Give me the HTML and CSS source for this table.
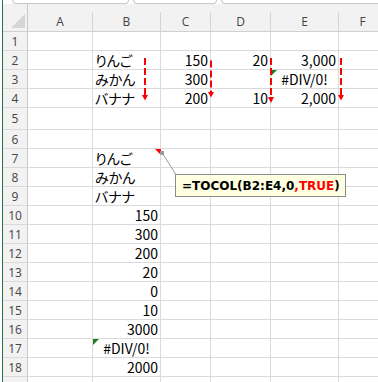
FILE: index.html
```html
<!DOCTYPE html>
<html lang="ja">
<head>
<meta charset="utf-8">
<title>TOCOL</title>
<link rel="stylesheet" href="styles.css">
</head>
<body>
<div class="app">
  <div class="edge"></div>
  <div class="main">
    <div class="chrome">
      <div class="tab t1"></div>
      <div class="tab t2"></div>
      <div class="tab t3"></div>
    </div>
    <div class="sheet">
      <div class="corner"><span class="selall"></span></div>
      <div class="band"></div>
      <div class="ch">A</div><div class="ch">B</div><div class="ch">C</div><div class="ch">D</div><div class="ch">E</div><div class="ch">F</div>

      <div class="rh">1</div><div class="c"></div><div class="c"></div><div class="c"></div><div class="c"></div><div class="c"></div><div class="c"></div>
      <div class="rh">2</div><div class="c"></div><div class="c jp">りんご</div><div class="c r">150</div><div class="c r">20</div><div class="c r">3,000</div><div class="c"></div>
      <div class="rh">3</div><div class="c"></div><div class="c jp">みかん</div><div class="c r">300</div><div class="c"></div><div class="c ctr gerr">#DIV/0!</div><div class="c"></div>
      <div class="rh">4</div><div class="c"></div><div class="c jp">バナナ</div><div class="c r">200</div><div class="c r">10</div><div class="c r">2,000</div><div class="c"></div>
      <div class="rh">5</div><div class="c"></div><div class="c"></div><div class="c"></div><div class="c"></div><div class="c"></div><div class="c"></div>
      <div class="rh">6</div><div class="c"></div><div class="c"></div><div class="c"></div><div class="c"></div><div class="c"></div><div class="c"></div>
      <div class="rh">7</div><div class="c"></div><div class="c jp cmt">りんご</div><div class="c"></div><div class="c"></div><div class="c"></div><div class="c"></div>
      <div class="rh">8</div><div class="c"></div><div class="c jp">みかん</div><div class="c"></div><div class="c"></div><div class="c"></div><div class="c"></div>
      <div class="rh">9</div><div class="c"></div><div class="c jp">バナナ</div><div class="c"></div><div class="c"></div><div class="c"></div><div class="c"></div>
      <div class="rh">10</div><div class="c"></div><div class="c r">150</div><div class="c"></div><div class="c"></div><div class="c"></div><div class="c"></div>
      <div class="rh">11</div><div class="c"></div><div class="c r">300</div><div class="c"></div><div class="c"></div><div class="c"></div><div class="c"></div>
      <div class="rh">12</div><div class="c"></div><div class="c r">200</div><div class="c"></div><div class="c"></div><div class="c"></div><div class="c"></div>
      <div class="rh">13</div><div class="c"></div><div class="c r">20</div><div class="c"></div><div class="c"></div><div class="c"></div><div class="c"></div>
      <div class="rh">14</div><div class="c"></div><div class="c r">0</div><div class="c"></div><div class="c"></div><div class="c"></div><div class="c"></div>
      <div class="rh">15</div><div class="c"></div><div class="c r">10</div><div class="c"></div><div class="c"></div><div class="c"></div><div class="c"></div>
      <div class="rh">16</div><div class="c"></div><div class="c r">3000</div><div class="c"></div><div class="c"></div><div class="c"></div><div class="c"></div>
      <div class="rh">17</div><div class="c"></div><div class="c ctr gerr">#DIV/0!</div><div class="c"></div><div class="c"></div><div class="c"></div><div class="c"></div>
      <div class="rh">18</div><div class="c"></div><div class="c r">2000</div><div class="c"></div><div class="c"></div><div class="c"></div><div class="c"></div>
      <div class="rh">19</div><div class="c"></div><div class="c"></div><div class="c"></div><div class="c"></div><div class="c"></div><div class="c"></div>
    </div>
  </div>

  <svg class="overlay" width="378" height="382" viewBox="0 0 378 382">
    <g class="arrows">
      <line x1="145" y1="58" x2="145" y2="95"/>
      <polygon points="142,95 148,95 145,100.5"/>
      <line x1="211" y1="60.5" x2="211" y2="92"/>
      <polygon points="208,92 214,92 211,97.5"/>
      <line x1="271" y1="58" x2="271" y2="97"/>
      <polygon points="268,97 274,97 271,103"/>
      <line x1="341" y1="58" x2="341" y2="95"/>
      <polygon points="338,95 344,95 341,100.5"/>
    </g>
    <line class="lead" x1="162.5" y1="153.5" x2="176.5" y2="175.5"/>
    <rect class="anchor" x="160" y="151" width="4" height="4"/>
  </svg>

  <div class="comment"><span>=TOCOL(B2:E4,0</span><span class="kw">,TRUE</span><span>)</span></div>
</div>
</body>
</html>
```

FILE: styles.css
```css
* { box-sizing: border-box; }

html, body {
  margin: 0;
  padding: 0;
  background: #ffffff;
  overflow: hidden;
}

.app {
  position: relative;
  display: flex;
  width: 378px;
  height: 382px;
  overflow: hidden;
  background: #ffffff;
}

.edge {
  flex: none;
  width: 3px;
  border-right: 1px solid #217346;
}

.main {
  flex: 1;
  min-width: 0;
  overflow: hidden;
}

.chrome {
  display: flex;
  gap: 4px;
  height: 4px;
  padding-left: 9px;
  background: #ffffff;
}

.tab {
  height: 4px;
  border: 1px solid #c8c8c8;
  border-top: none;
  border-radius: 0 0 4px 4px;
}

.t1 { width: 117px; }
.t2 { width: 84px; }
.t3 { flex: 1; border-right: none; border-bottom-right-radius: 0; }

.sheet {
  display: grid;
  grid-template-columns: 25px 65px 68px 50px 60px 68px 48px;
  grid-template-rows: 8px 20px repeat(4, 19px) 22px repeat(14, 19px);
  font-family: "Noto Sans CJK JP", sans-serif;
  font-size: 14px;
  color: #000000;
}

.corner {
  grid-row: 1 / span 2;
  grid-column: 1;
  background: #f2f2f2;
  border-right: 1px solid #c8c8c8;
  border-bottom: 1px solid #d0d0d0;
  display: flex;
  align-items: flex-end;
  justify-content: flex-end;
  padding: 0 2px 3px 0;
}

.selall {
  width: 0;
  height: 0;
  border-left: 14px solid transparent;
  border-bottom: 14px solid #d6d6d6;
}

.band {
  grid-row: 1;
  grid-column: 2 / -1;
  background: #f2f2f2;
}

.ch {
  background: #f2f2f2;
  border-right: 1px solid #d4d4d4;
  border-bottom: 1px solid #d0d0d0;
  display: flex;
  align-items: center;
  justify-content: center;
  font-family: "Open Sans", sans-serif;
  font-size: 12px;
  color: #444444;
  padding-bottom: 1px;
}

.rh {
  background: #f2f2f2;
  border-right: 1px solid #c8c8c8;
  border-bottom: 1px solid #dadada;
  display: flex;
  align-items: center;
  justify-content: center;
  font-family: "Open Sans", sans-serif;
  font-size: 12px;
  color: #444444;
}

.c {
  position: relative;
  border-right: 1px solid #dadada;
  border-bottom: 1px solid #dadada;
  padding: 0 2px 0 2px;
  display: flex;
  align-items: center;
  white-space: nowrap;
  line-height: 18px;
}

.r { justify-content: flex-end; }
.ctr { justify-content: center; }
.jp { font-feature-settings: "palt" 1; }

.gerr::before {
  content: "";
  position: absolute;
  left: 0;
  top: 0;
  width: 0;
  height: 0;
  border-top: 6px solid #1f7a2a;
  border-right: 6px solid transparent;
}

.cmt::after {
  content: "";
  position: absolute;
  right: -1px;
  top: 0;
  width: 0;
  height: 0;
  border-top: 6px solid #ff0000;
  border-left: 6px solid transparent;
}

.overlay {
  position: absolute;
  left: 0;
  top: 0;
  pointer-events: none;
}

.arrows line {
  stroke: #ff0000;
  stroke-width: 2;
  stroke-dasharray: 7 3;
}

.arrows polygon {
  fill: #ff0000;
}

.lead {
  stroke: #9a9a9a;
  stroke-width: 1;
}

.anchor {
  fill: #9a9a9a;
}

.comment {
  position: absolute;
  left: 175px;
  top: 174px;
  width: 171px;
  height: 23px;
  background: #ffffe1;
  border: 1px solid #8c8c8c;
  display: flex;
  align-items: center;
  padding-left: 6px;
  font-family: "DejaVu Sans", "Liberation Sans", sans-serif;
  font-weight: bold;
  font-size: 12px;
  color: #000000;
  white-space: nowrap;
}

.kw { color: #ff0000; }
```
